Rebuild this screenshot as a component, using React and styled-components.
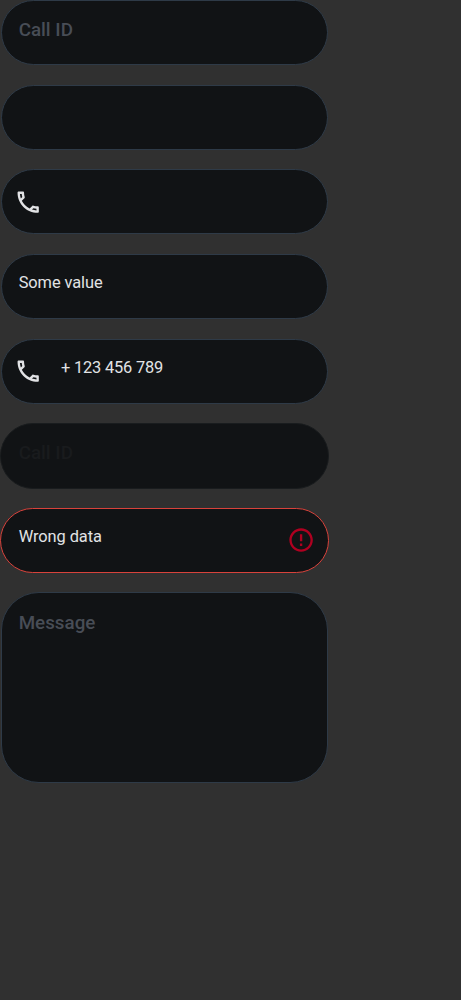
import React from "react";
import styled, { createGlobalStyle, css } from "styled-components";
import { MdOutlinePhone, MdErrorOutline } from "react-icons/md";

const GlobalStyle = createGlobalStyle`
  body {
    margin: 0;
    min-height: 100vh;
    background: #303030;
    font-family: Roboto, "Liberation Sans", sans-serif;
  }
`;

const Form = styled.main`
  display: flex;
  flex-direction: column;
  gap: 19px;
  width: 329px;
`;

const tones = {
  normal: css`
    padding: 0.3px 0.6px;
    --line: #2e3a47;
    --inset: 17.1px;
  `,
  disabled: css`
    padding: 0;
    --line: #191c1e;
    --inset: 17.7px;
  `,
  error: css`
    padding: 0;
    --line: #d8423b;
    --inset: 17.7px;
  `,
};

const Field = styled.label`
  display: flex;
  box-sizing: border-box;
  height: ${(p) => (p.$multiline ? "191.4px" : "65.6px")};
  ${(p) => tones[p.$tone || "normal"]}
`;

const Surface = styled.span`
  display: flex;
  flex: 1;
  box-sizing: border-box;
  align-items: flex-start;
  padding: 17.1px 13.1px 0 var(--inset);
  border: 1px solid var(--line);
  border-radius: ${(p) => (p.$multiline ? "38px" : "33px")};
  background: #111315;
`;

const Placeholder = styled.span`
  font-size: 18.8px;
  font-weight: 500;
  line-height: 24px;
  color: ${(p) => (p.$disabled ? "#191b1d" : "#484d56")};
`;

const Value = styled.span`
  flex: 1;
  font-size: 16.4px;
  letter-spacing: ${(p) => (p.$numeric ? "-0.18px" : "-0.08px")};
  line-height: 22px;
  color: #e2e3e5;
`;

const LeadingIcon = styled(MdOutlinePhone)`
  flex: none;
  width: 28.4px;
  height: 28.4px;
  margin: 0.7px 18.2px 0 -4.3px;
  color: #e2e3e5;
`;

const ErrorIcon = styled(MdErrorOutline)`
  flex: none;
  width: 28.2px;
  height: 28.2px;
  margin-top: 0.7px;
  color: #af0020;
`;

function TextField({ placeholder, value, phone, tone, multiline }) {
  return (
    <Field $tone={tone} $multiline={multiline}>
      <Surface $multiline={multiline}>
        {phone && <LeadingIcon />}
        {placeholder && (
          <Placeholder $disabled={tone === "disabled"}>{placeholder}</Placeholder>
        )}
        {value && <Value $numeric={phone}>{value}</Value>}
        {tone === "error" && <ErrorIcon />}
      </Surface>
    </Field>
  );
}

export default function App() {
  return (
    <>
      <GlobalStyle />
      <Form>
        <TextField placeholder="Call ID" />
        <TextField />
        <TextField phone />
        <TextField value="Some value" />
        <TextField phone value="+ 123 456 789" />
        <TextField placeholder="Call ID" tone="disabled" />
        <TextField value="Wrong data" tone="error" />
        <TextField placeholder="Message" multiline />
      </Form>
    </>
  );
}
